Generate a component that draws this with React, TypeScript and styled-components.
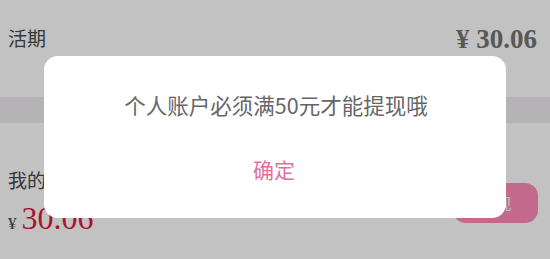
import React from "react";
import styled, { createGlobalStyle } from "styled-components";

const Global = createGlobalStyle`
  html, body { margin: 0; padding: 0; background: #ffffff; }
  #root { width: 550px; height: 259px; overflow: hidden; position: relative; }
`;

const Page = styled.div`
  width: 550px;
  height: 259px;
  background: #ffffff;
  display: flex;
  flex-direction: column;
  font-family: "Noto Sans CJK SC", "Noto Sans", sans-serif;
`;

const TopRow = styled.div`
  height: 97px;
  box-sizing: border-box;
  padding: 26px 13px 0 8px;
  display: flex;
  justify-content: space-between;
  align-items: flex-start;
`;

const Label = styled.div`
  font-size: 19px;
  line-height: 24px;
  color: #474747;
`;

const TotalAmount = styled.div`
  font-family: "Liberation Serif", "Times New Roman", serif;
  font-weight: bold;
  font-size: 27px;
  line-height: 24px;
  color: #747474;
  padding-top: 1px;
`;

const Band = styled.div`
  height: 26px;
  background: #eeebee;
`;

const Section = styled.div`
  display: flex;
  justify-content: space-between;
  align-items: flex-start;
  padding: 45px 12px 0 8px;
`;

const Column = styled.div`
  display: flex;
  flex-direction: column;
`;

const Amount = styled.div`
  display: flex;
  align-items: baseline;
  gap: 5px;
  margin-top: 9px;
  font-family: "Liberation Serif", "Times New Roman", serif;
  line-height: 34px;
`;

const Yen = styled.span`
  font-size: 17px;
  color: #474747;
`;

const Value = styled.span`
  font-size: 32px;
  color: #e5163c;
`;

const ActionButton = styled.button`
  margin-top: 15px;
  width: 85px;
  height: 40px;
  border: none;
  border-radius: 13px;
  background: #ff8ab8;
  color: #ffffff;
  font-family: "Noto Sans CJK SC", sans-serif;
  font-size: 16px;
  padding: 0 0 0 0;
  display: flex;
  align-items: center;
  justify-content: center;
`;

const Overlay = styled.div`
  position: absolute;
  inset: 0;
  background: rgba(0, 0, 0, 0.24);
  display: flex;
  justify-content: center;
  align-items: flex-start;
  padding-top: 56px;
  box-sizing: border-box;
`;

const Dialog = styled.div`
  width: 462px;
  box-sizing: border-box;
  background: #ffffff;
  border-radius: 14px;
  padding: 38px 0 38px;
  display: flex;
  flex-direction: column;
  align-items: center;
  gap: 42px;
  font-family: "Noto Sans CJK SC", "Noto Sans", sans-serif;
`;

const Message = styled.div`
  font-size: 21.5px;
  line-height: 22px;
  color: #666666;
  padding-left: 2px;
`;

const Confirm = styled.div`
  font-size: 21px;
  line-height: 22px;
  color: #e2709b;
  margin-left: -2px;
`;

export default function App() {
  return (
    <>
      <Global />
      <Page>
        <TopRow>
          <Label>活期</Label>
          <TotalAmount>¥ 30.06</TotalAmount>
        </TopRow>
        <Band />
        <Section>
          <Column>
            <Label>我的余额</Label>
            <Amount>
              <Yen>¥</Yen>
              <Value>30.06</Value>
            </Amount>
          </Column>
          <ActionButton>提现</ActionButton>
        </Section>
      </Page>
      <Overlay>
        <Dialog>
          <Message>个人账户必须满50元才能提现哦</Message>
          <Confirm>确定</Confirm>
        </Dialog>
      </Overlay>
    </>
  );
}
